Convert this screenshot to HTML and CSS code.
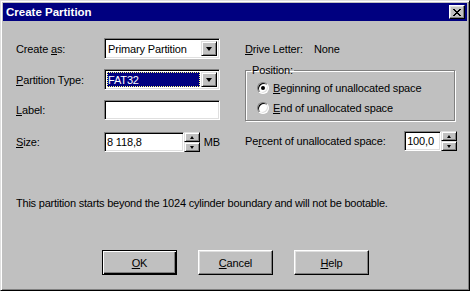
FILE: index.html
```html
<!DOCTYPE html>
<html>
<head>
<meta charset="utf-8">
<link rel="stylesheet" href="styles.css">
</head>
<body>
<div class="window">
  <div class="titlebar">
    <span class="title">Create Partition</span>
    <span class="close"><svg width="8" height="7" viewBox="0 0 8 7"><path d="M0 0h2v1h1v1h2V1h1V0h2v1H7v1H6v1H5v1h1v1h1v1h1v1H6V6H5V5H3v1H2v1H0V6h1V5h1V4h1V3H2V2H1V1H0z" fill="#000"/></svg></span>
  </div>
  <div class="content">
    <div class="top">
      <div class="left">
        <div class="row r-combo">
          <span class="lbl">Create <u>a</u>s:</span>
          <div class="combo"><span class="ctext">Primary Partition</span><span class="dd"><i class="tri"></i></span></div>
        </div>
        <div class="row r-combo gap10">
          <span class="lbl"><u>P</u>artition Type:</span>
          <div class="combo"><span class="ctext sel">FAT32</span><span class="dd"><i class="tri"></i></span></div>
        </div>
        <div class="row r-edit gap10">
          <span class="lbl"><u>L</u>abel:</span>
          <div class="edit wide"></div>
        </div>
        <div class="row r-edit gap12">
          <span class="lbl"><u>S</u>ize:</span>
          <div class="edit size">8 118,8</div>
          <div class="spin"><span class="sb"><i class="up"></i></span><span class="sb"><i class="down"></i></span></div>
          <span class="unit">MB</span>
        </div>
      </div>
      <div class="right">
        <div class="row r-combo">
          <span class="dl"><u>D</u>rive Letter:</span><span>None</span>
        </div>
        <fieldset class="group">
          <legend>Position:</legend>
          <div class="radio-row"><span class="radio on"></span><span><u>B</u>eginning of unallocated space</span></div>
          <div class="radio-row"><span class="radio"></span><span><u>E</u>nd of unallocated space</span></div>
        </fieldset>
        <div class="row r-edit gap10">
          <span class="plbl">Pe<u>r</u>cent of unallocated space:</span>
          <div class="edit pct">100,0</div>
          <div class="spin"><span class="sb"><i class="up"></i></span><span class="sb"><i class="down"></i></span></div>
        </div>
      </div>
    </div>
    <p class="msg">This partition starts beyond the 1024 cylinder boundary and will not be bootable.</p>
    <div class="buttons">
      <button class="btn default"><u>O</u>K</button>
      <button class="btn"><u>C</u>ancel</button>
      <button class="btn"><u>H</u>elp</button>
    </div>
  </div>
</div>
</body>
</html>
```
FILE: styles.css
```css
* { box-sizing: border-box; }
html, body { margin: 0; padding: 0; background: #c0c0c0; }
body { font-family: "Liberation Sans", Arial, sans-serif; font-size: 11px; color: #000; letter-spacing: -0.15px; }

.window {
  width: 470px; height: 291px;
  background: #c0c0c0;
  border: 1px solid; border-color: #dfdfdf #000 #000 #dfdfdf;
  box-shadow: inset 1px 1px #fff, inset -1px -1px #808080;
  padding: 2px;
}
.titlebar {
  height: 18px; background: #000080; color: #fff;
  display: flex; align-items: center; justify-content: space-between;
  padding: 0 2px 0 3px;
}
.title { font-weight: bold; font-size: 11.5px; letter-spacing: 0; }
.close {
  width: 16px; height: 14px; background: #c0c0c0;
  border: 1px solid; border-color: #fff #000 #000 #fff;
  box-shadow: inset -1px -1px #808080, inset 1px 1px #dfdfdf;
  display: flex; align-items: center; justify-content: center;
}
.close svg { display: block; }

.content { padding: 17px 0 0 13px; }
.top { display: flex; gap: 25px; }
.left { width: 204px; }
.right { width: 212px; }

.row { display: flex; align-items: center; }
.r-combo { height: 21px; }
.r-edit { height: 20px; }
.gap10 { margin-top: 10px; }
.gap12 { margin-top: 12px; }
.lbl { width: 88px; flex: none; }

.combo {
  width: 116px; height: 21px; background: #fff;
  border: 1px solid; border-color: #808080 #fff #fff #808080;
  box-shadow: inset 1px 1px #000, inset -1px -1px #dfdfdf;
  padding: 2px; display: flex; align-items: stretch;
}
.ctext { flex: 1; padding-left: 1px; display: flex; align-items: center; margin-right: 1px; }
.ctext.sel {
  background: #000080; color: #fff;
  outline: 1px dotted #ffff80; outline-offset: -1px;
}
.dd {
  width: 16px; flex: none; background: #c0c0c0;
  border: 1px solid; border-color: #dfdfdf #000 #000 #dfdfdf;
  box-shadow: inset 1px 1px #fff, inset -1px -1px #808080;
  display: flex; align-items: center; justify-content: center;
}
.tri {
  width: 0; height: 0; display: block;
  border-left: 3.5px solid transparent; border-right: 3.5px solid transparent;
  border-top: 4px solid #000;
}

.edit {
  height: 20px; background: #fff;
  border: 1px solid; border-color: #808080 #fff #fff #808080;
  box-shadow: inset 1px 1px #000, inset -1px -1px #dfdfdf;
  padding: 0 2px; display: flex; align-items: center;
}
.edit.wide { width: 116px; }
.edit.size { width: 83px; }
.edit.pct { width: 37px; margin-left: auto; }

.spin { width: 16px; height: 20px; display: flex; flex-direction: column; flex: none; }
.sb {
  flex: 1; background: #c0c0c0;
  border: 1px solid; border-color: #dfdfdf #000 #000 #dfdfdf;
  box-shadow: inset 1px 1px #fff, inset -1px -1px #808080;
  display: flex; align-items: center; justify-content: center;
}
.up, .down { width: 0; height: 0; display: block; border-left: 2.5px solid transparent; border-right: 2.5px solid transparent; }
.up { border-bottom: 3px solid #000; }
.down { border-top: 3px solid #000; }
.unit { margin-left: 4px; }

.dl { width: 69px; }
.group {
  margin: 6px 2px 0 0; padding: 2px 0 0 11px; height: 56px;
  border: 1px solid #808080; box-shadow: 1px 1px #fff, inset 1px 1px #fff;
}
.group legend { padding: 0 1px; margin-left: -6px; line-height: 11px; }
.radio-row { display: flex; align-items: center; height: 20px; gap: 4px; }
.radio {
  width: 12px; height: 12px; border-radius: 50%; background: #fff; position: relative;
  border: 1px solid; border-color: #808080 #fff #fff #808080;
  box-shadow: inset 1px 1px #000, inset -1px -1px #dfdfdf;
}
.radio.on::after {
  content: ""; position: absolute; left: 3px; top: 3px; width: 4px; height: 4px;
  border-radius: 50%; background: #000;
}
.plbl { width: 160px; }

.msg { margin: 45px 0 0 0; line-height: 13px; letter-spacing: -0.22px; }
.buttons { display: flex; gap: 21px; margin: 40px 0 0 86px; }
.btn {
  width: 75px; height: 25px; background: #c0c0c0; padding: 0;
  font-family: inherit; font-size: 11px; color: #000; letter-spacing: inherit;
  border: 1px solid; border-color: #fff #000 #000 #fff;
  box-shadow: inset -1px -1px #808080, inset 1px 1px #dfdfdf;
}
.btn.default {
  border: 1px solid #000;
  box-shadow: inset 1px 1px #fff, inset -1px -1px #000, inset -2px -2px #808080;
}
```
